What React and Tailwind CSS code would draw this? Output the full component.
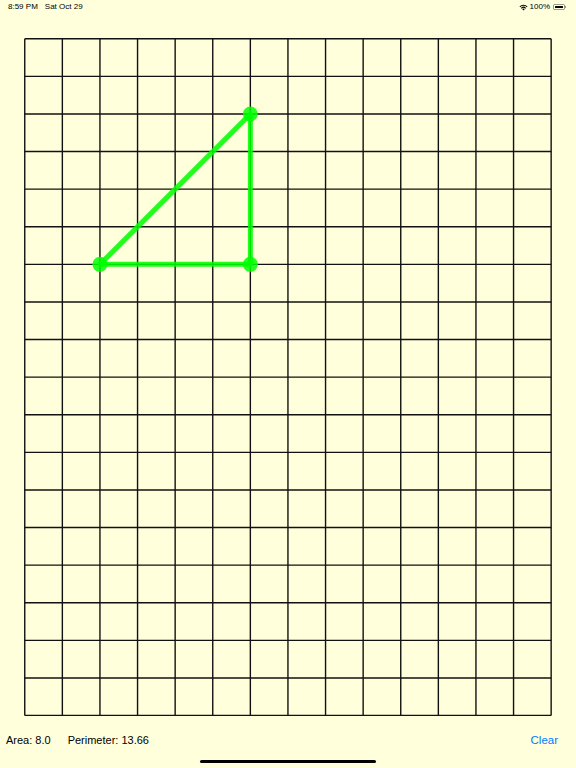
export default function App() {
  const cell = 37.6;
  const cols = 14;
  const rows = 18;
  const w = cols * cell;
  const h = rows * cell;
  const vLines = Array.from({ length: cols + 1 }, (_, i) => 0.75 + i * cell);
  const hLines = Array.from({ length: rows + 1 }, (_, i) => 0.75 + i * cell);
  const pts = [
    [2, 6],
    [6, 2],
    [6, 6],
  ].map(([c, r]) => [0.75 + c * cell, 0.75 + r * cell]);

  return (
    <div
      className="relative w-[576px] h-[768px] bg-[#ffffdc] flex flex-col overflow-hidden"
      style={{ fontFamily: '"Liberation Sans", Arial, sans-serif' }}
    >
      {/* status bar */}
      <div className="h-[38px] flex items-start justify-between px-[8px] pt-[2px] text-[8px] font-medium text-black">
        <div className="flex gap-[7px] leading-[10px]">
          <span>8:59 PM</span>
          <span>Sat Oct 29</span>
        </div>
        <div className="flex items-center gap-[2px] leading-[10px] pr-[2px]">
          <svg width="9" height="7" viewBox="0 0 12 9">
            <path d="M6 8.5 L4.2 6.6 A2.6 2.6 0 0 1 7.8 6.6 Z" fill="black" />
            <path d="M2.6 5 A4.8 4.8 0 0 1 9.4 5 L8.4 6 A3.4 3.4 0 0 0 3.6 6 Z" fill="black" />
            <path d="M0.6 3 A7.6 7.6 0 0 1 11.4 3 L10.4 4 A6.2 6.2 0 0 0 1.6 4 Z" fill="black" />
          </svg>
          <span>100%</span>
          <div className="flex items-center ml-[1px]">
            <div className="w-[12px] h-[6px] rounded-[1.5px] border border-black/40 p-[1px]">
              <div className="w-full h-full bg-black rounded-[0.5px]" />
            </div>
            <div className="w-[1px] h-[2px] bg-black/40" />
          </div>
        </div>
      </div>

      {/* grid canvas */}
      <div className="ml-[24px]">
        <svg width={w + 1.5} height={h + 1.5} className="block">
          {vLines.map((x, i) => (
            <line key={"v" + i} x1={x} y1={0.75} x2={x} y2={h + 0.75} stroke="#111" strokeWidth="1.4" />
          ))}
          {hLines.map((y, i) => (
            <line key={"h" + i} x1={0.75} y1={y} x2={w + 0.75} y2={y} stroke="#111" strokeWidth="1.4" />
          ))}
          <g opacity="0.88">
            <polygon
              points={pts.map((p) => p.join(",")).join(" ")}
              fill="none"
              stroke="#00ff00"
              strokeWidth="5"
              strokeLinejoin="round"
            />
          </g>
          {pts.map(([x, y], i) => (
            <circle key={i} cx={x} cy={y} r="7.5" fill="#00ff00" opacity="0.85" />
          ))}
        </svg>
      </div>

      {/* bottom bar */}
      <div className="flex items-center h-[22px] mt-[13px] text-[11px] text-black">
        <span className="ml-[6px]">Area: 8.0</span>
        <span className="ml-[17px]">Perimeter: 13.66</span>
        <span className="ml-auto mr-[18px] text-[11.5px] text-[#007aff]">Clear</span>
      </div>

      <div className="absolute bottom-[5px] left-[200px] w-[176px] h-[3px] rounded-full bg-black" />
    </div>
  );
}
